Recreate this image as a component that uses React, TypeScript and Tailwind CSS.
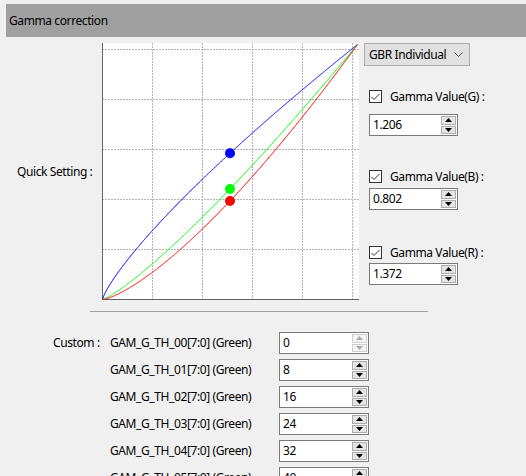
import React from "react";

const SIZE = 256;

function curve(gamma: number) {
  const pts: string[] = [];
  for (let v = 0; v <= 255; v += 1) {
    const y = 255 * Math.pow(v / 255, gamma);
    pts.push(`${(v + 0.5).toFixed(1)},${(SIZE - y + 0.5).toFixed(1)}`);
  }
  return pts.join(" ");
}

function dotY(gamma: number) {
  return SIZE - 255 * Math.pow(127.5 / 255, gamma) + 0.5;
}

const gammas = [
  { g: 0.802, color: "#0000ff" },
  { g: 1.206, color: "#00ff00" },
  { g: 1.372, color: "#ff0000" },
];

function Chart() {
  const grid = [50, 100, 150, 200, 250];
  return (
    <svg width={257} height={257} className="block shrink-0">
      <rect x={0} y={0} width={257} height={257} fill="#ffffff" />
      {grid.map((v) => (
        <g key={v}>
          <line x1={v + 0.5} y1={0} x2={v + 0.5} y2={256} stroke="#b4b4b4" strokeDasharray="2 1" />
          <line x1={0} y1={SIZE - v + 0.5} x2={257} y2={SIZE - v + 0.5} stroke="#b4b4b4" strokeDasharray="2 1" />
        </g>
      ))}
      <line x1={0.5} y1={0} x2={0.5} y2={257} stroke="#646464" strokeWidth={1} />
      <line x1={0} y1={256.5} x2={257} y2={256.5} stroke="#646464" strokeWidth={1} />
      {gammas.map((c) => (
        <polyline key={c.g} points={curve(c.g)} fill="none" stroke={c.color} strokeWidth={1} />
      ))}
      {gammas.map((c) => (
        <circle key={c.g} cx={128} cy={dotY(c.g)} r={5} fill={c.color} />
      ))}
    </svg>
  );
}

function Arrow({ up, disabled }: { up?: boolean; disabled?: boolean }) {
  return (
    <svg width={7} height={4} className="block">
      <polygon
        points={up ? "0,4 7,4 3.5,0" : "0,0 7,0 3.5,4"}
        fill={disabled ? "#a8a8a8" : "#000000"}
      />
    </svg>
  );
}

function Spin({ value, width, disabled }: { value: string; width: string; disabled?: boolean }) {
  return (
    <div className={`flex h-[22px] items-stretch border border-[#7a7a7a] bg-white ${width}`}>
      <div className="flex flex-1 items-center pl-[3px] text-black">{value}</div>
      <div className="my-px mr-px flex w-[15px] flex-col gap-px">
        <div
          className={`flex flex-1 items-center justify-center border ${
            disabled ? "border-[#d0d0d0] bg-[#f4f4f4]" : "border-[#adadad] bg-[#e5e5e5]"
          }`}
        >
          <Arrow up disabled={disabled} />
        </div>
        <div
          className={`flex flex-1 items-center justify-center border ${
            disabled ? "border-[#d0d0d0] bg-[#f4f4f4]" : "border-[#adadad] bg-[#e5e5e5]"
          }`}
        >
          <Arrow disabled={disabled} />
        </div>
      </div>
    </div>
  );
}

function Check({ label }: { label: string }) {
  return (
    <div className="flex h-[13px] items-center gap-[8px]">
      <div className="flex h-[13px] w-[13px] items-center justify-center border border-[#333333] bg-white">
        <svg width={9} height={8}>
          <polyline points="0.5,4 3,6.5 8.5,1" fill="none" stroke="#333333" strokeWidth={1} />
        </svg>
      </div>
      <span className="text-black">{label}</span>
    </div>
  );
}

const rows = ["0", "8", "16", "24", "32", "40"];

export default function App() {
  return (
    <div
      className="h-[476px] w-[526px] overflow-hidden bg-[#f0f0f0] pt-1 text-[12px] leading-none tracking-[-0.4px] text-black"
      style={{ fontFamily: '"Noto Sans", sans-serif' }}
    >
      <div className="ml-[6px] flex h-[33px] items-center bg-[#a0a0a0] pl-[3px]">Gamma correction</div>

      <div className="mt-[6px] flex">
        <div className="flex w-[102px] items-center pl-[17px]">Quick Setting :</div>
        <Chart />
        <div className="ml-[5px] flex flex-col">
          <div className="flex h-[23px] w-[106px] items-center justify-between border border-[#adadad] bg-[#e1e1e1] pl-[4px] pr-[6px]">
            <span>GBR Individual</span>
            <svg width={9} height={5}>
              <polyline points="0.5,0.5 4.5,4.5 8.5,0.5" fill="none" stroke="#555555" strokeWidth={1} />
            </svg>
          </div>
          <div className="ml-[5px] mt-[24px] flex flex-col">
            <Check label="Gamma Value(G) :" />
            <div className="mt-[11px]">
              <Spin value="1.206" width="w-[89px]" />
            </div>
            <div className="mt-[34px]">
              <Check label="Gamma Value(B) :" />
            </div>
            <div className="mt-[5px]">
              <Spin value="0.802" width="w-[89px]" />
            </div>
            <div className="mt-[36px]">
              <Check label="Gamma Value(R) :" />
            </div>
            <div className="mt-[4px]">
              <Spin value="1.372" width="w-[89px]" />
            </div>
          </div>
        </div>
      </div>

      <div className="ml-[90px] mt-[11px] h-px w-[338px] bg-[#a0a0a0]" />

      <div className="mt-[20px] flex flex-col gap-[5px]">
        {rows.map((v, i) => (
          <div key={v} className="flex h-[22px] items-center">
            <div className="w-[110px] pl-[53px]">{i === 0 ? "Custom :" : ""}</div>
            <div className="w-[169px]">GAM_G_TH_0{i}[7:0] (Green)</div>
            <Spin value={v} width="w-[90px]" disabled={i === 0} />
          </div>
        ))}
      </div>
    </div>
  );
}
